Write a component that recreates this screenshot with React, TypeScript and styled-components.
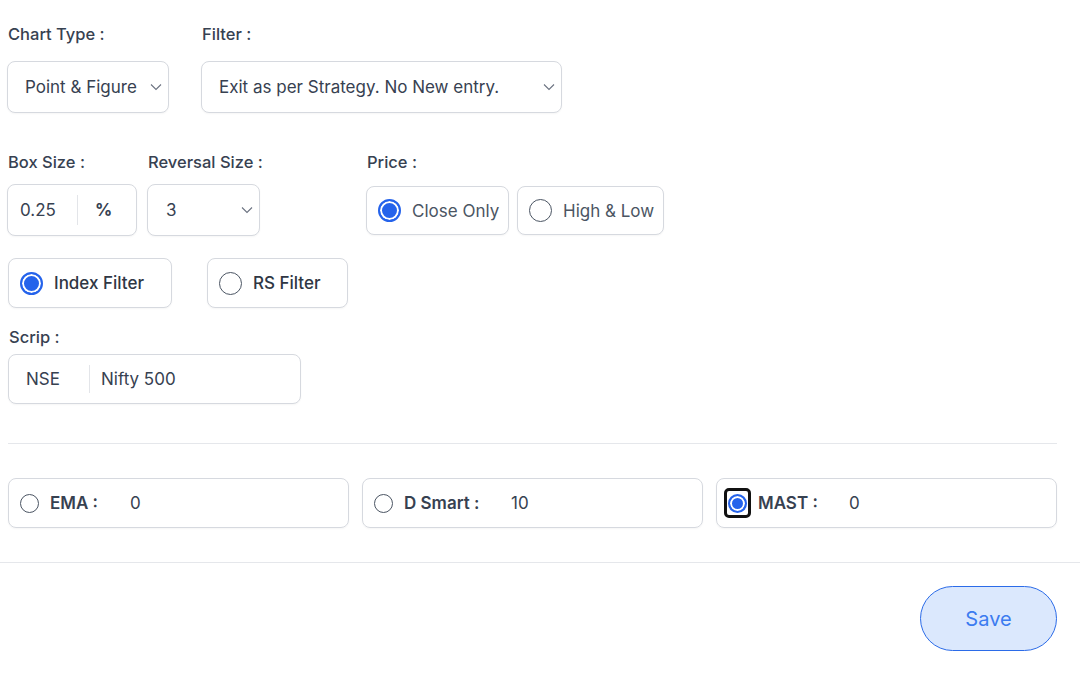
import React from "react";
import styled, { createGlobalStyle } from "styled-components";

const Global = createGlobalStyle`
  html, body { margin: 0; padding: 0; background: #ffffff; }
  body { font-family: Inter, "Noto Sans", sans-serif; color: #374151; }
  * { box-sizing: border-box; }
`;

const Page = styled.div`
  width: 1080px;
  height: 674px;
  overflow: hidden;
  display: flex;
  flex-direction: column;
`;

const Body = styled.div`
  padding: 22px 23px 0 7px;
  display: flex;
  flex-direction: column;
`;

const Row = styled.div<{ $gap?: number; $mt?: number }>`
  display: flex;
  align-items: flex-start;
  gap: ${(p) => p.$gap ?? 0}px;
  margin-top: ${(p) => p.$mt ?? 0}px;
`;

const Field = styled.div<{ $ml?: number; $mt?: number; $w?: number }>`
  display: flex;
  flex-direction: column;
  width: ${(p) => (p.$w ? `${p.$w}px` : "auto")};
  margin-left: ${(p) => p.$ml ?? 0}px;
  margin-top: ${(p) => p.$mt ?? 0}px;
`;

const Label = styled.div<{ $mb?: number }>`
  font-size: 16.5px;
  line-height: 24px;
  font-weight: 550;
  color: #374151;
  padding-left: 1px;
  white-space: nowrap;
  margin-bottom: ${(p) => p.$mb ?? 15}px;
`;

const Box = styled.div<{ $w: number; $h?: number }>`
  width: ${(p) => p.$w}px;
  height: ${(p) => p.$h ?? 52}px;
  border: 1px solid #d6d9df;
  border-radius: 8px;
  background: #fff;
  display: flex;
  align-items: center;
  box-shadow: 0 1px 2px rgba(0, 0, 0, 0.04);
  font-size: 17px;
  color: #374151;
`;

const SelectText = styled.span<{ $pl?: number }>`
  flex: 1;
  padding-left: ${(p) => p.$pl ?? 17}px;
  white-space: nowrap;
`;

const Chevron = styled.svg`
  width: 12px;
  height: 8px;
  margin-right: 6px;
  flex: none;
`;

const Cell = styled.span<{ $w?: number; $pl?: number; $bold?: boolean }>`
  width: ${(p) => (p.$w ? `${p.$w}px` : "auto")};
  flex: ${(p) => (p.$w ? "none" : "1")};
  padding-left: ${(p) => p.$pl ?? 0}px;
  font-weight: ${(p) => (p.$bold ? 700 : 400)};
  font-size: 17px;
  white-space: nowrap;
`;

const Divider = styled.span`
  width: 1px;
  align-self: stretch;
  margin: 10px 0;
  background: #e3e5e9;
  flex: none;
`;

const OptionBox = styled.div<{ $w: number; $h: number; $ml?: number }>`
  width: ${(p) => p.$w}px;
  height: ${(p) => p.$h}px;
  margin-left: ${(p) => p.$ml ?? 0}px;
  border: 1px solid #d6d9df;
  border-radius: 8px;
  background: #fff;
  display: flex;
  align-items: center;
  padding-left: 11px;
  gap: 11px;
  box-shadow: 0 1px 2px rgba(0, 0, 0, 0.04);
`;

const OptionText = styled.span<{ $bold?: boolean }>`
  font-size: 17px;
  font-weight: ${(p) => (p.$bold ? 500 : 400)};
  color: ${(p) => (p.$bold ? "#2f3744" : "#4b5563")};
  white-space: nowrap;
`;

const Radio = styled.span<{ $checked?: boolean; $size: number }>`
  width: ${(p) => p.$size}px;
  height: ${(p) => p.$size}px;
  border-radius: 50%;
  flex: none;
  border: ${(p) => (p.$checked ? "2px solid #2563eb" : "1.5px solid #4b5563")};
  background: ${(p) => (p.$checked ? "#2563eb" : "#fff")};
  box-shadow: ${(p) => (p.$checked ? "inset 0 0 0 2px #fff" : "none")};
`;

const Focus = styled.span`
  width: 27px;
  height: 30px;
  border: 3px solid #111;
  border-radius: 5px;
  display: flex;
  align-items: center;
  justify-content: center;
  flex: none;
  margin-left: -4px;
  margin-right: -4px;
`;

const Rule = styled.hr<{ $full?: boolean }>`
  border: none;
  height: 1px;
  background: #e5e7eb;
  margin: 0;
  margin-left: ${(p) => (p.$full ? 0 : 1)}px;
`;

const Spacer = styled.div<{ $h: number }>`
  height: ${(p) => p.$h}px;
  flex: none;
`;

const IndRow = styled.div`
  display: flex;
  gap: 13px;
  margin-top: 34px;
  padding-left: 1px;
`;

const IndBox = styled.div`
  flex: 1;
  height: 50px;
  border: 1px solid #d6d9df;
  border-radius: 8px;
  display: flex;
  align-items: center;
  padding-left: 11px;
  gap: 11px;
  box-shadow: 0 1px 2px rgba(0, 0, 0, 0.04);
`;

const IndLabel = styled.span<{ $w: number }>`
  width: ${(p) => p.$w}px;
  font-size: 17px;
  font-weight: 600;
  color: #374151;
  white-space: nowrap;
  flex: none;
`;

const IndValue = styled.span`
  font-size: 17px;
  color: #374151;
`;

const Footer = styled.div`
  display: flex;
  justify-content: flex-end;
  padding: 23px 23px 0 0;
`;

const SaveButton = styled.button`
  width: 137px;
  height: 65px;
  border-radius: 33px;
  border: 1.5px solid #2b6be8;
  background: #dbe8fd;
  color: #3b7bf0;
  font-family: Inter, sans-serif;
  font-size: 20px;
  font-weight: 400;
  cursor: pointer;
`;

const Chev = () => (
  <Chevron viewBox="0 0 12 8">
    <path d="M1 1.5 L6 6.5 L11 1.5" fill="none" stroke="#6b7280" strokeWidth="1.1" />
  </Chevron>
);

export default function App() {
  return (
    <Page>
      <Global />
      <Body>
        <Row $gap={32}>
          <Field>
            <Label>Chart Type :</Label>
            <Box $w={162}>
              <SelectText>Point &amp; Figure</SelectText>
              <Chev />
            </Box>
          </Field>
          <Field>
            <Label>Filter :</Label>
            <Box $w={361}>
              <SelectText>Exit as per Strategy. No New entry.</SelectText>
              <Chev />
            </Box>
          </Field>
        </Row>

        <Row $mt={37}>
          <Field $w={130}>
            <Label $mb={10}>Box Size :</Label>
            <Box $w={130}>
              <Cell $w={69} $pl={12}>0.25</Cell>
              <Divider />
              <Cell $pl={17} $bold>%</Cell>
            </Box>
          </Field>
          <Field $ml={10} $w={113}>
            <Label $mb={10}>Reversal Size :</Label>
            <Box $w={113}>
              <SelectText $pl={18}>3</SelectText>
              <Chev />
            </Box>
          </Field>
          <Field $ml={106}>
            <Label $mb={12}>Price :</Label>
            <Row $gap={8}>
              <OptionBox $w={143} $h={49}>
                <Radio $size={23} $checked />
                <OptionText>Close Only</OptionText>
              </OptionBox>
              <OptionBox $w={147} $h={49}>
                <Radio $size={23} />
                <OptionText>High &amp; Low</OptionText>
              </OptionBox>
            </Row>
          </Field>
        </Row>

        <Row $gap={35} $mt={22}>
          <OptionBox $w={164} $h={50} $ml={1}>
            <Radio $size={23} $checked />
            <OptionText $bold>Index Filter</OptionText>
          </OptionBox>
          <OptionBox $w={141} $h={50}>
            <Radio $size={23} />
            <OptionText $bold>RS Filter</OptionText>
          </OptionBox>
        </Row>

        <Field $ml={1} $mt={17}>
          <Label $mb={5}>Scrip :</Label>
          <Box $w={293} $h={50}>
            <Cell $w={80} $pl={17}>NSE</Cell>
            <Divider />
            <Cell $pl={11}>Nifty 500</Cell>
          </Box>
        </Field>

        <Spacer $h={39} />
        <Rule />

        <IndRow>
          <IndBox>
            <Radio $size={19} />
            <IndLabel $w={69}>EMA :</IndLabel>
            <IndValue>0</IndValue>
          </IndBox>
          <IndBox>
            <Radio $size={19} />
            <IndLabel $w={96}>D Smart :</IndLabel>
            <IndValue>10</IndValue>
          </IndBox>
          <IndBox>
            <Focus>
              <Radio $size={19} $checked />
            </Focus>
            <IndLabel $w={80}>MAST :</IndLabel>
            <IndValue>0</IndValue>
          </IndBox>
        </IndRow>
      </Body>
      <Spacer $h={34} />
      <Rule $full />
      <Footer>
        <SaveButton>Save</SaveButton>
      </Footer>
    </Page>
  );
}
